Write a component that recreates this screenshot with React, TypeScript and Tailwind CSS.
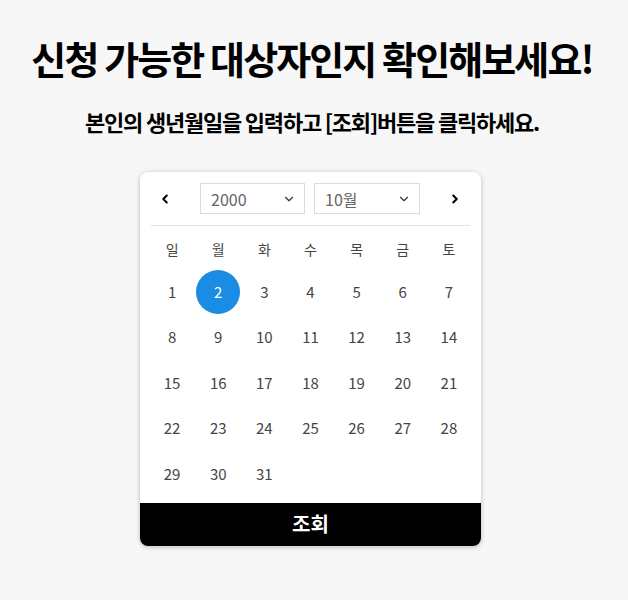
import { ChevronDown, ChevronLeft, ChevronRight } from "lucide-react";

const weekdays = ["일", "월", "화", "수", "목", "금", "토"];

// 2000년 10월 1일은 일요일
const days: (number | null)[] = Array.from({ length: 31 }, (_, i) => i + 1);

const selected = 2;

export default function App() {
  const weeks: (number | null)[][] = [];
  for (let i = 0; i < days.length; i += 7) {
    weeks.push(days.slice(i, i + 7));
  }

  return (
    <div
      className="min-h-[600px] bg-[#f7f7f7] flex flex-col items-center pt-[30px] pr-[4px] text-black"
      style={{ fontFamily: '"Noto Sans CJK KR", "Noto Sans", sans-serif' }}
    >
      <h1 className="text-[38px] leading-[56px] font-bold tracking-[-0.05em]">
        신청 가능한 대상자인지 확인해보세요!
      </h1>
      <p className="mt-[21px] text-[22px] leading-[28px] font-bold tracking-[-0.055em]">
        본인의 생년월일을 입력하고 [조회]버튼을 클릭하세요.
      </p>

      <div className="mt-[37px] mr-[3px] w-[341px] bg-white rounded-[8px] shadow-[0_1px_5px_rgba(0,0,0,0.25)] overflow-hidden">
        {/* 연월 선택 */}
        <div className="px-[11px] pt-[11px]">
          <div className="flex items-center h-[31px]">
            <button className="w-[28px] flex justify-center text-black">
              <ChevronLeft size={14} strokeWidth={3.5} />
            </button>
            <div className="ml-[21px] w-[105px] h-[31px] border border-[#dcdcdc] flex items-center justify-between pl-[10px] pr-[8px] text-[16px] text-[#666]">
              <span>2000</span>
              <ChevronDown size={14} strokeWidth={2} className="text-[#333]" />
            </div>
            <div className="ml-[9px] w-[106px] h-[31px] border border-[#dcdcdc] flex items-center justify-between pl-[10px] pr-[8px] text-[16px] text-[#666]">
              <span>10월</span>
              <ChevronDown size={14} strokeWidth={2} className="text-[#333]" />
            </div>
            <button className="ml-[21px] w-[28px] flex justify-center text-black">
              <ChevronRight size={14} strokeWidth={3.5} />
            </button>
          </div>
          <div className="mt-[11px] h-px bg-[#e2e2e2]" />
        </div>

        {/* 달력 */}
        <div className="px-[9px] pt-[10px] pb-[6px]">
          <div className="grid grid-cols-7 text-center text-[14px] text-[#444] h-[26px] items-center">
            {weekdays.map((w) => (
              <span key={w}>{w}</span>
            ))}
          </div>
          <div className="mt-[7px] flex flex-col">
            {weeks.map((week, wi) => (
              <div key={wi} className="grid grid-cols-7 h-[45.5px] items-center">
                {Array.from({ length: 7 }, (_, di) => {
                  const d = week[di];
                  if (!d) return <span key={di} />;
                  const isSel = d === selected;
                  return (
                    <div key={di} className="flex justify-center">
                      <span
                        className={
                          isSel
                            ? "w-[44px] h-[44px] rounded-full bg-[#1a8ce3] text-white flex items-center justify-center text-[15px]"
                            : "w-[44px] h-[44px] rounded-full text-[#444] flex items-center justify-center text-[15px]"
                        }
                      >
                        {d}
                      </span>
                    </div>
                  );
                })}
              </div>
            ))}
          </div>
        </div>

        <button className="w-full h-[43px] bg-black text-white text-[20px] font-bold flex items-center justify-center">
          조회
        </button>
      </div>
    </div>
  );
}
